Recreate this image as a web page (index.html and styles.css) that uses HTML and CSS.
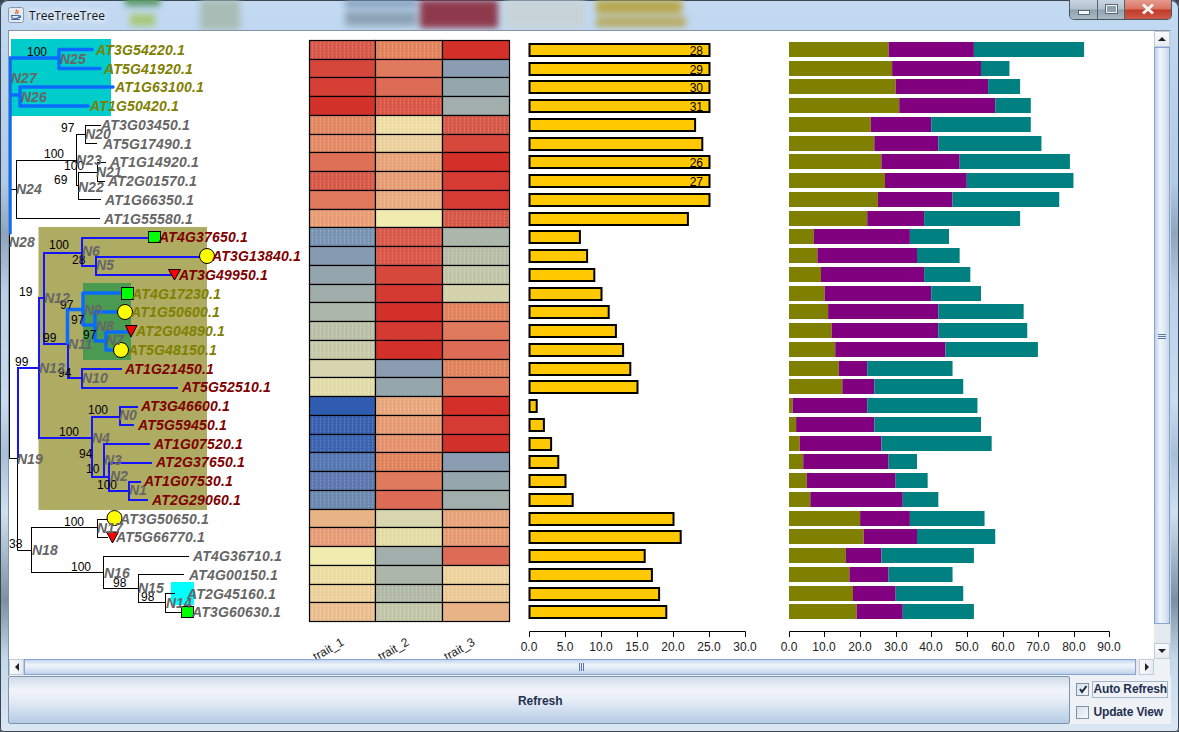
FILE: index.html
```html
<!DOCTYPE html>
<html lang="en">
<head>
<meta charset="utf-8">
<title>TreeTreeTree</title>
<link rel="stylesheet" href="styles.css">
</head>
<body>
<div class="window">
  <svg class="glass" viewBox="0 0 1179 30" aria-hidden="true">
    <g class="glass-blur">
      <rect x="125" y="-4" width="35" height="10" fill="#5c9a68"/>
      <rect x="130" y="14" width="25" height="12" fill="#a8c878"/>
      <rect x="200" y="0" width="40" height="30" fill="#a9bdb6"/>
      <rect x="345" y="0" width="72" height="7" fill="#7f9ab8"/>
      <rect x="345" y="11" width="72" height="15" fill="#8ea4b6"/>
      <rect x="420" y="0" width="78" height="28" fill="#8e3a4c"/>
      <rect x="505" y="0" width="80" height="28" fill="#c7d3d8"/>
      <rect x="596" y="0" width="86" height="14" fill="#b9a850"/>
      <rect x="596" y="17" width="90" height="10" fill="#b8ab62"/>
    </g>
  </svg>
  <header class="titlebar">
    <svg class="java-icon" viewBox="0 0 16 16" aria-hidden="true">
      <rect x="0.5" y="0.5" width="15" height="15" rx="2" fill="#e6eaf0" stroke="#8a97a6"/>
      <path d="M8 2.5C10 4 6.5 5 8 7M10 3.5C11 5 9 5.500 9.500 7" fill="none" stroke="#d9651e" stroke-width="1.200"/>
      <path d="M3.500 8.500H11V9.500C11 11 10 11.500 7.500 11.500C5 11.500 3.500 11 3.500 9.500ZM11 9H12.500V10.500H11M3 12.500H12" fill="none" stroke="#3c6ea8" stroke-width="1.100"/>
    </svg>
    <span class="title-text">TreeTreeTree</span>
    <div class="controls">
      <div class="ctl ctl-min"><span class="min-glyph"></span></div>
      <div class="ctl ctl-max"><span class="max-glyph"></span></div>
      <div class="ctl ctl-close">
        <svg class="close-glyph" viewBox="0 0 14 12" aria-hidden="true"><path d="M2 1.500L12 10.500M12 1.500L2 10.500"/></svg>
      </div>
    </div>
  </header>

  <div class="client">
    <div class="scrollpane">
      <div class="viewport">
        <svg class="chart" viewBox="9 31 1145 628" width="1145" height="628">
          <defs>
            <pattern id="d" width="4" height="3" patternUnits="userSpaceOnUse">
              <rect width="1" height="1" fill="#fff" fill-opacity="0.28"/>
              <rect x="2" y="1" width="1" height="1" fill="#000" fill-opacity="0.1"/>
            </pattern>
          </defs>
          <!-- highlight boxes -->
          <rect x="11" y="39" width="100" height="77" fill="#00cccc"/>
          <rect x="38.500" y="227" width="168.500" height="283" fill="#aeab62"/>
          <rect x="83" y="283" width="48" height="77" fill="#4b9a52"/>
          <rect x="171" y="582" width="23" height="23" fill="#00ffff"/>

          <!-- branches -->
          <path class="branch-black" d="M9.500 233V458.500H17.500V550.500H31.500M9.500 90V92M11 189.500H16.500M16.500 160V218.500M16 160.500H76M16 218.500H100M76.500 134V185M76 134.500H85.500M85.500 125V143M85 125.500H101M85 143.500H97M76 185.500H78.500M78.500 172V199.500M78 172.500H97M97.500 162V181M97 162.500H106M97 181.500H105M78 199.500H101M31.500 527V572M31 527.500H97M97.500 519V537M97 519.500H110M97 537.500H108M31 572.500H103.500M103.500 556V588M103 556.500H189M103 588.500H138M138.500 574V602M138 574.500H184M138 602.500H165M165.500 593V612M165 593.500H175M165 612.500H181"/>
          <path class="branch-blue" d="M17.500 458V367.500H38.500M38.500 297V437M38 297.500H43M43.500 252V343M43 252.500H81M81.500 237V265M81 237.500H148M81 265.500H95M95.500 256V274M95 256.500H200M95 274.500H172M43 343.500H67M67.500 343V377M67 377.500H81M81.500 368V387M81 368.500H122M81 387.500H178M38 437.500H91M91.500 416V476M91 416.500H119M119.500 406V424M119 406.500H138M119 424.500H134M91 476.500H103M103.500 443V476M103 443.500H150M103 476.500H108M108.500 462V490M108 462.500H152M108 490.500H128M128.500 481V499M128 481.500H141M128 499.500H148"/>
          <path class="branch-thick" d="M10 233V58H59M59 49.500V68.500M59 49.500H92M59 68.500H100M10 95H20M20 87V106M20 87H113M20 106H88M67.500 343V309.500H83M83 293V325M83 293H122M83 325H95M95 312V341M95 312H120M95 341H106M106 332V350M106 332H130M106 350H115"/>

          <!-- markers -->
          <rect class="mk-square" x="148.500" y="231.500" width="12" height="11"/>
          <circle class="mk-circle" cx="207" cy="256" r="7.500"/>
          <path class="mk-tri" d="M168.500 269.500H180.500L174.500 280Z"/>
          <rect class="mk-square" x="121.500" y="287.500" width="12" height="12"/>
          <circle class="mk-circle" cx="125" cy="312" r="7.500"/>
          <path class="mk-tri" d="M125.500 325.500H137L131 337Z"/>
          <circle class="mk-circle" cx="121" cy="350" r="7.500"/>
          <circle class="mk-circle" cx="114.500" cy="518" r="7.500"/>
          <path class="mk-tri" d="M106.500 532H118.500L112.500 543Z"/>
          <rect class="mk-square" x="181.500" y="606.500" width="12" height="11"/>

          <!-- support values -->
          <g class="support">
            <text x="27" y="56">100</text><text x="61" y="132">97</text><text x="44" y="158">100</text><text x="64" y="170">100</text><text x="54" y="184">69</text>
            <text x="49" y="249">100</text><text x="72" y="264">28</text><text x="19" y="296">19</text><text x="60" y="309">97</text><text x="71" y="324">97</text><text x="83" y="339">97</text><text x="43" y="342">99</text><text x="15" y="366">99</text><text x="58" y="377">94</text>
            <text x="88" y="414">100</text><text x="59" y="436">100</text><text x="79" y="458">94</text><text x="86" y="473">10</text><text x="97" y="489">100</text><text x="64" y="526">100</text><text x="9" y="548">38</text><text x="71" y="571">100</text><text x="113" y="587">98</text><text x="141" y="601">98</text>
          </g>

          <!-- node names -->
          <g class="node">
            <text x="60" y="64">N25</text><text x="11" y="83">N27</text><text x="21" y="102">N26</text><text x="85" y="139">N20</text><text x="76" y="165">N23</text><text x="96" y="177">N21</text><text x="78" y="192">N22</text><text x="16" y="194">N24</text><text x="9" y="247">N28</text>
            <text x="82" y="256">N6</text><text x="96" y="270">N5</text><text x="44" y="303">N12</text><text x="39" y="373">N13</text><text x="84" y="315">N9</text><text x="96" y="331">N8</text><text x="106" y="345">N7</text><text x="68" y="349">N11</text><text x="82" y="383">N10</text><text x="119" y="420">N0</text>
            <text x="92" y="443">N4</text><text x="104" y="465">N3</text><text x="110" y="481">N2</text><text x="129" y="495">N1</text><text x="17" y="464">N19</text><text x="97" y="533">N17</text><text x="32" y="555">N18</text><text x="104" y="578">N16</text><text x="138" y="593">N15</text><text x="166" y="608">N14</text>
          </g>

          <!-- leaf names -->
          <g class="leaf leaf-olive">
            <text x="96" y="55">AT3G54220.1</text><text x="104" y="74">AT5G41920.1</text><text x="115" y="92">AT1G63100.1</text><text x="90" y="111">AT1G50420.1</text>
            <text x="132" y="299">AT4G17230.1</text><text x="131" y="317">AT1G50600.1</text><text x="136" y="336">AT2G04890.1</text><text x="128" y="355">AT5G48150.1</text>
          </g>
          <g class="leaf leaf-gray">
            <text x="101" y="130">AT3G03450.1</text><text x="103" y="149">AT5G17490.1</text><text x="110" y="167">AT1G14920.1</text><text x="108" y="186">AT2G01570.1</text><text x="105" y="205">AT1G66350.1</text><text x="104" y="224">AT1G55580.1</text>
            <text x="120" y="524">AT3G50650.1</text><text x="116" y="542">AT5G66770.1</text><text x="193" y="561">AT4G36710.1</text><text x="189" y="580">AT4G00150.1</text><text x="187" y="599">AT2G45160.1</text><text x="192" y="617">AT3G60630.1</text>
          </g>
          <g class="leaf leaf-maroon">
            <text x="159" y="242">AT4G37650.1</text><text x="212" y="261">AT3G13840.1</text><text x="179" y="280">AT3G49950.1</text><text x="125" y="374">AT1G21450.1</text><text x="182" y="392">AT5G52510.1</text>
            <text x="141" y="411">AT3G46600.1</text><text x="138" y="430">AT5G59450.1</text><text x="154" y="449">AT1G07520.1</text><text x="156" y="467">AT2G37650.1</text><text x="144" y="486">AT1G07530.1</text><text x="152" y="505">AT2G29060.1</text>
          </g>

          <!-- data rows: heat cells, value bar, stacked bar -->
          <g transform="translate(0,40.5)"><rect class="cell c1" height="19" fill="#d85a4a"/><rect class="cell c2" height="19" fill="#e38660"/><rect class="cell c3" height="19" fill="#d3302a"/><rect class="dither c1" height="18" fill="url(#d)"/><rect class="dither c2" height="18" fill="url(#d)"/><rect class="bar" width="180"/><text class="bar-num" x="703" y="14.500">28</text><g class="stack"><rect class="s1" width="28"/><rect class="s2" x="28" width="24"/><rect class="s3" x="52" width="31"/></g></g>
          <g transform="translate(0,59.5)"><rect class="cell c1" height="18" fill="#d6473b"/><rect class="cell c2" height="18" fill="#e07a5c"/><rect class="cell c3" height="18" fill="#8a9db1"/><rect class="bar" width="180"/><text class="bar-num" x="703" y="14.500">29</text><g class="stack"><rect class="s1" width="29"/><rect class="s2" x="29" width="25"/><rect class="s3" x="54" width="8"/></g></g>
          <g transform="translate(0,77.5)"><rect class="cell c1" height="19" fill="#d53f35"/><rect class="cell c2" height="19" fill="#dd6c56"/><rect class="cell c3" height="19" fill="#96a6ad"/><rect class="bar" width="180"/><text class="bar-num" x="703" y="14.500">30</text><g class="stack"><rect class="s1" width="30"/><rect class="s2" x="30" width="26"/><rect class="s3" x="56" width="9"/></g></g>
          <g transform="translate(0,96.5)"><rect class="cell c1" height="19" fill="#d2322a"/><rect class="cell c2" height="19" fill="#dd5a4b"/><rect class="cell c3" height="19" fill="#a1aeac"/><rect class="dither c2" height="18" fill="url(#d)"/><rect class="bar" width="180"/><text class="bar-num" x="703" y="14.500">31</text><g class="stack"><rect class="s1" width="31"/><rect class="s2" x="31" width="27"/><rect class="s3" x="58" width="10"/></g></g>
          <g transform="translate(0,115.500)"><rect class="cell c1" height="19" fill="#e38a65"/><rect class="cell c2" height="19" fill="#f0e0a8"/><rect class="cell c3" height="19" fill="#d75a4a"/><rect class="dither c1" height="18" fill="url(#d)"/><rect class="dither c2" height="18" fill="url(#d)"/><rect class="dither c3" height="18" fill="url(#d)"/><rect class="bar" width="165.600"/><g class="stack"><rect class="s1" width="23"/><rect class="s2" x="23" width="17"/><rect class="s3" x="40" width="28"/></g></g>
          <g transform="translate(0,134.500)"><rect class="cell c1" height="18" fill="#e48d68"/><rect class="cell c2" height="18" fill="#ecd3a0"/><rect class="cell c3" height="18" fill="#d6483c"/><rect class="dither c1" height="17" fill="url(#d)"/><rect class="dither c2" height="17" fill="url(#d)"/><rect class="bar" width="172.800"/><g class="stack"><rect class="s1" width="24"/><rect class="s2" x="24" width="18"/><rect class="s3" x="42" width="29"/></g></g>
          <g transform="translate(0,152.500)"><rect class="cell c1" height="19" fill="#de7058"/><rect class="cell c2" height="19" fill="#e9a57c"/><rect class="cell c3" height="19" fill="#d3302a"/><rect class="dither c2" height="18" fill="url(#d)"/><rect class="bar" width="180"/><text class="bar-num" x="703" y="14.500">26</text><g class="stack"><rect class="s1" width="26"/><rect class="s2" x="26" width="22"/><rect class="s3" x="48" width="31"/></g></g>
          <g transform="translate(0,171.500)"><rect class="cell c1" height="19" fill="#d95b4a"/><rect class="cell c2" height="19" fill="#e89f76"/><rect class="cell c3" height="19" fill="#d53b32"/><rect class="dither c1" height="18" fill="url(#d)"/><rect class="dither c2" height="18" fill="url(#d)"/><rect class="bar" width="180"/><text class="bar-num" x="703" y="14.500">27</text><g class="stack"><rect class="s1" width="27"/><rect class="s2" x="27" width="23"/><rect class="s3" x="50" width="30"/></g></g>
          <g transform="translate(0,190.500)"><rect class="cell c1" height="19" fill="#e0795c"/><rect class="cell c2" height="19" fill="#eaae82"/><rect class="cell c3" height="19" fill="#d53b32"/><rect class="dither c2" height="18" fill="url(#d)"/><rect class="bar" width="180"/><g class="stack"><rect class="s1" width="25"/><rect class="s2" x="25" width="21"/><rect class="s3" x="46" width="30"/></g></g>
          <g transform="translate(0,209.500)"><rect class="cell c1" height="18" fill="#eb9f76"/><rect class="cell c2" height="18" fill="#f0ebae"/><rect class="cell c3" height="18" fill="#d85a48"/><rect class="dither c1" height="17" fill="url(#d)"/><rect class="dither c3" height="17" fill="url(#d)"/><rect class="bar" width="158.400"/><g class="stack"><rect class="s1" width="22"/><rect class="s2" x="22" width="16"/><rect class="s3" x="38" width="27"/></g></g>
          <g transform="translate(0,227.500)"><rect class="cell c1" height="19" fill="#7a96b4"/><rect class="cell c2" height="19" fill="#db5c4c"/><rect class="cell c3" height="19" fill="#adb6aa"/><rect class="dither c1" height="18" fill="url(#d)"/><rect class="dither c2" height="18" fill="url(#d)"/><rect class="bar" width="50.400"/><g class="stack"><rect class="s1" width="7"/><rect class="s2" x="7" width="27"/><rect class="s3" x="34" width="11"/></g></g>
          <g transform="translate(0,246.500)"><rect class="cell c1" height="19" fill="#879bb2"/><rect class="cell c2" height="19" fill="#dc5a4c"/><rect class="cell c3" height="19" fill="#b9bfa8"/><rect class="dither c2" height="18" fill="url(#d)"/><rect class="dither c3" height="18" fill="url(#d)"/><rect class="bar" width="57.600"/><g class="stack"><rect class="s1" width="8"/><rect class="s2" x="8" width="28"/><rect class="s3" x="36" width="12"/></g></g>
          <g transform="translate(0,265.500)"><rect class="cell c1" height="19" fill="#95a5ad"/><rect class="cell c2" height="19" fill="#d6473c"/><rect class="cell c3" height="19" fill="#c4c8aa"/><rect class="dither c3" height="18" fill="url(#d)"/><rect class="bar" width="64.800"/><g class="stack"><rect class="s1" width="9"/><rect class="s2" x="9" width="29"/><rect class="s3" x="38" width="13"/></g></g>
          <g transform="translate(0,284.500)"><rect class="cell c1" height="18" fill="#a0adab"/><rect class="cell c2" height="18" fill="#d53a32"/><rect class="cell c3" height="18" fill="#d4d3ad"/><rect class="bar" width="72"/><g class="stack"><rect class="s1" width="10"/><rect class="s2" x="10" width="30"/><rect class="s3" x="40" width="14"/></g></g>
          <g transform="translate(0,302.500)"><rect class="cell c1" height="19" fill="#adb6aa"/><rect class="cell c2" height="19" fill="#d3302a"/><rect class="cell c3" height="19" fill="#e38660"/><rect class="dither c3" height="18" fill="url(#d)"/><rect class="bar" width="79.200"/><g class="stack"><rect class="s1" width="11"/><rect class="s2" x="11" width="31"/><rect class="s3" x="42" width="24"/></g></g>
          <g transform="translate(0,321.500)"><rect class="cell c1" height="19" fill="#bcc2a9"/><rect class="cell c2" height="19" fill="#d53a32"/><rect class="cell c3" height="19" fill="#e07a5c"/><rect class="dither c1" height="18" fill="url(#d)"/><rect class="bar" width="86.400"/><g class="stack"><rect class="s1" width="12"/><rect class="s2" x="12" width="30"/><rect class="s3" x="42" width="25"/></g></g>
          <g transform="translate(0,340.500)"><rect class="cell c1" height="19" fill="#c8cbaa"/><rect class="cell c2" height="19" fill="#d2302a"/><rect class="cell c3" height="19" fill="#dd6c56"/><rect class="dither c1" height="18" fill="url(#d)"/><rect class="bar" width="93.600"/><g class="stack"><rect class="s1" width="13"/><rect class="s2" x="13" width="31"/><rect class="s3" x="44" width="26"/></g></g>
          <g transform="translate(0,359.500)"><rect class="cell c1" height="18" fill="#d6d5ad"/><rect class="cell c2" height="18" fill="#8a9db1"/><rect class="cell c3" height="18" fill="#e38660"/><rect class="dither c3" height="17" fill="url(#d)"/><rect class="bar" width="100.800"/><g class="stack"><rect class="s1" width="14"/><rect class="s2" x="14" width="8"/><rect class="s3" x="22" width="24"/></g></g>
          <g transform="translate(0,377.500)"><rect class="cell c1" height="19" fill="#e4deab"/><rect class="cell c2" height="19" fill="#96a6ad"/><rect class="cell c3" height="19" fill="#e07a5c"/><rect class="dither c1" height="18" fill="url(#d)"/><rect class="bar" width="108"/><g class="stack"><rect class="s1" width="15"/><rect class="s2" x="15" width="9"/><rect class="s3" x="24" width="25"/></g></g>
          <g transform="translate(0,396.500)"><rect class="cell c1" height="19" fill="#2f5cb0"/><rect class="cell c2" height="19" fill="#e9a87e"/><rect class="cell c3" height="19" fill="#d3302a"/><rect class="dither c2" height="18" fill="url(#d)"/><rect class="bar" width="7.200"/><g class="stack"><rect class="s1" width="1"/><rect class="s2" x="1" width="21"/><rect class="s3" x="22" width="31"/></g></g>
          <g transform="translate(0,415.500)"><rect class="cell c1" height="19" fill="#3a62b0"/><rect class="cell c2" height="19" fill="#e89d74"/><rect class="cell c3" height="19" fill="#d53b32"/><rect class="dither c1" height="18" fill="url(#d)"/><rect class="dither c2" height="18" fill="url(#d)"/><rect class="bar" width="14.400"/><g class="stack"><rect class="s1" width="2"/><rect class="s2" x="2" width="22"/><rect class="s3" x="24" width="30"/></g></g>
          <g transform="translate(0,434.500)"><rect class="cell c1" height="18" fill="#3d66b2"/><rect class="cell c2" height="18" fill="#e79570"/><rect class="cell c3" height="18" fill="#d2302a"/><rect class="dither c1" height="17" fill="url(#d)"/><rect class="dither c2" height="17" fill="url(#d)"/><rect class="bar" width="21.600"/><g class="stack"><rect class="s1" width="3"/><rect class="s2" x="3" width="23"/><rect class="s3" x="26" width="31"/></g></g>
          <g transform="translate(0,452.500)"><rect class="cell c1" height="19" fill="#5878b4"/><rect class="cell c2" height="19" fill="#e38660"/><rect class="cell c3" height="19" fill="#8a9db1"/><rect class="dither c1" height="18" fill="url(#d)"/><rect class="dither c2" height="18" fill="url(#d)"/><rect class="bar" width="28.800"/><g class="stack"><rect class="s1" width="4"/><rect class="s2" x="4" width="24"/><rect class="s3" x="28" width="8"/></g></g>
          <g transform="translate(0,471.500)"><rect class="cell c1" height="19" fill="#5f7ab2"/><rect class="cell c2" height="19" fill="#e07a5c"/><rect class="cell c3" height="19" fill="#96a6ad"/><rect class="dither c1" height="18" fill="url(#d)"/><rect class="bar" width="36"/><g class="stack"><rect class="s1" width="5"/><rect class="s2" x="5" width="25"/><rect class="s3" x="30" width="9"/></g></g>
          <g transform="translate(0,490.500)"><rect class="cell c1" height="19" fill="#6d8ab0"/><rect class="cell c2" height="19" fill="#dd6c56"/><rect class="cell c3" height="19" fill="#a1aeac"/><rect class="dither c1" height="18" fill="url(#d)"/><rect class="bar" width="43.200"/><g class="stack"><rect class="s1" width="6"/><rect class="s2" x="6" width="26"/><rect class="s3" x="32" width="10"/></g></g>
          <g transform="translate(0,509.500)"><rect class="cell c1" height="18" fill="#e8b486"/><rect class="cell c2" height="18" fill="#d7d6ae"/><rect class="cell c3" height="18" fill="#e9a57c"/><rect class="dither c3" height="17" fill="url(#d)"/><rect class="bar" width="144"/><g class="stack"><rect class="s1" width="20"/><rect class="s2" x="20" width="14"/><rect class="s3" x="34" width="21"/></g></g>
          <g transform="translate(0,527.500)"><rect class="cell c1" height="19" fill="#e9a07a"/><rect class="cell c2" height="19" fill="#e6dfaa"/><rect class="cell c3" height="19" fill="#e89d74"/><rect class="dither c1" height="18" fill="url(#d)"/><rect class="dither c2" height="18" fill="url(#d)"/><rect class="dither c3" height="18" fill="url(#d)"/><rect class="bar" width="151.200"/><g class="stack"><rect class="s1" width="21"/><rect class="s2" x="21" width="15"/><rect class="s3" x="36" width="22"/></g></g>
          <g transform="translate(0,546.500)"><rect class="cell c1" height="19" fill="#f0ebae"/><rect class="cell c2" height="19" fill="#a1aeac"/><rect class="cell c3" height="19" fill="#dd6c56"/><rect class="bar" width="115.200"/><g class="stack"><rect class="s1" width="16"/><rect class="s2" x="16" width="10"/><rect class="s3" x="26" width="26"/></g></g>
          <g transform="translate(0,565.500)"><rect class="cell c1" height="19" fill="#eedfa4"/><rect class="cell c2" height="19" fill="#adb6aa"/><rect class="cell c3" height="19" fill="#efd5a0"/><rect class="dither c1" height="18" fill="url(#d)"/><rect class="dither c3" height="18" fill="url(#d)"/><rect class="bar" width="122.400"/><g class="stack"><rect class="s1" width="17"/><rect class="s2" x="17" width="11"/><rect class="s3" x="28" width="18"/></g></g>
          <g transform="translate(0,584.500)"><rect class="cell c1" height="18" fill="#efd39e"/><rect class="cell c2" height="18" fill="#b4bcaa"/><rect class="cell c3" height="18" fill="#eecb98"/><rect class="dither c1" height="17" fill="url(#d)"/><rect class="dither c2" height="17" fill="url(#d)"/><rect class="dither c3" height="17" fill="url(#d)"/><rect class="bar" width="129.600"/><g class="stack"><rect class="s1" width="18"/><rect class="s2" x="18" width="12"/><rect class="s3" x="30" width="19"/></g></g>
          <g transform="translate(0,602.500)"><rect class="cell c1" height="19" fill="#ecc090"/><rect class="cell c2" height="19" fill="#c4c8aa"/><rect class="cell c3" height="19" fill="#e8b486"/><rect class="dither c1" height="18" fill="url(#d)"/><rect class="dither c2" height="18" fill="url(#d)"/><rect class="bar" width="136.800"/><g class="stack"><rect class="s1" width="19"/><rect class="s2" x="19" width="13"/><rect class="s3" x="32" width="20"/></g></g>

          <!-- axes -->
          <path class="axis" d="M529.500 637V631.500H745.500V637M565.500 632V637M601.500 632V637M637.500 632V637M673.500 632V637M709.500 632V637"/>
          <path class="axis" d="M789.500 637V631.500H1109.500V637M824.500 632V637M860.500 632V637M896.500 632V637M931.500 632V637M967.500 632V637M1003.500 632V637M1038.500 632V637M1074.500 632V637"/>
          <g class="tick">
            <text x="529" y="651">0.0</text><text x="565" y="651">5.0</text><text x="601" y="651">10.0</text><text x="637" y="651">15.0</text><text x="673" y="651">20.0</text><text x="709" y="651">25.0</text><text x="745" y="651">30.0</text>
            <text x="789" y="651">0.0</text><text x="824" y="651">10.0</text><text x="860" y="651">20.0</text><text x="896" y="651">30.0</text><text x="931" y="651">40.0</text><text x="967" y="651">50.0</text><text x="1003" y="651">60.0</text><text x="1038" y="651">70.0</text><text x="1074" y="651">80.0</text><text x="1109" y="651">90.0</text>
          </g>
          <g class="trait">
            <text transform="translate(316,661) rotate(-30)">trait_1</text>
            <text transform="translate(381,661) rotate(-30)">trait_2</text>
            <text transform="translate(447,661) rotate(-30)">trait_3</text>
          </g>
        </svg>
      </div>

      <div class="vscroll">
        <div class="sb-btn"><span class="arrow arrow-up"></span></div>
        <div class="v-thumb"><span class="v-grip"></span></div>
        <div class="v-track"></div>
        <div class="sb-btn"><span class="arrow arrow-down"></span></div>
      </div>
      <div class="hscroll">
        <div class="sb-btn sb-btn-h"><span class="arrow arrow-left"></span></div>
        <div class="h-thumb"><span class="h-grip"></span></div>
        <div class="h-track"></div>
        <div class="sb-btn sb-btn-h"><span class="arrow arrow-right"></span></div>
      </div>
      <div class="corner"></div>
    </div>

    <div class="actions">
      <button class="refresh" type="button">Refresh</button>
      <div class="checks">
        <label class="check check-focus"><span class="box box-on">
          <svg class="tick-glyph" viewBox="0 0 10 10" aria-hidden="true"><path d="M2 5L4 8L8.500 2"/></svg>
        </span><span class="check-label">Auto Refresh</span></label>
        <label class="check"><span class="box"></span><span class="check-label">Update View</span></label>
      </div>
    </div>
  </div>
</div>
</body>
</html>
```
FILE: styles.css
```css
* { box-sizing: border-box; }
html, body { margin: 0; padding: 0; }
body { width: 1179px; height: 732px; overflow: hidden; background: #3a4450; font-family: "Liberation Sans", Arial, sans-serif; }

.window {
  position: relative;
  width: 1179px;
  height: 732px;
  display: flex;
  flex-direction: column;
  border-radius: 8px 8px 4px 4px;
  overflow: hidden;
  background: linear-gradient(180deg, #c3daf2 0, #aecbe8 25%, #8ea5bd 32%, #b9d0e8 40%, #c9dcf0 55%, #a8bfd8 62%, #cfe0f2 70%, #7c8fa3 82%, #c4d8ec 90%, #dbe7f3 100%);
  box-shadow: inset 0 0 0 1px #3a4450;
}

.glass { position: absolute; left: 0; top: 0; width: 1179px; height: 30px; }
.glass-blur { filter: blur(3px); }

.titlebar {
  position: relative;
  height: 30px;
  flex: none;
  display: flex;
  align-items: center;
  padding: 0 0 0 8px;
}
.java-icon { width: 16px; height: 16px; flex: none; }
.title-text {
  margin-left: 5px;
  font: 12px "Open Sans", sans-serif;
  color: #101820;
  letter-spacing: 0.100px;
  text-shadow: 0 0 6px #fff, 0 0 10px #fff, 0 0 14px #fff;
}

.controls {
  position: absolute;
  top: 0;
  right: 7px;
  height: 20px;
  display: flex;
  border: 1px solid #4a5562;
  border-top: none;
  border-radius: 0 0 5px 5px;
  overflow: hidden;
}
.ctl { height: 19px; display: flex; align-items: center; justify-content: center; border-right: 1px solid #56626e; }
.ctl-min { width: 28px; background: linear-gradient(180deg, #c8d6e2 0, #b0c0cd 48%, #8fa1ae 52%, #a9bac6 100%); }
.ctl-max { width: 27px; background: linear-gradient(180deg, #c8d6e2 0, #b0c0cd 48%, #8fa1ae 52%, #a9bac6 100%); }
.ctl-close { width: 46px; border-right: none; background: linear-gradient(180deg, #e49a8c 0, #d97262 48%, #bf3a28 52%, #d0594a 100%); }
.min-glyph { width: 12px; height: 5px; margin-top: 6px; background: #f4f7fa; border: 1px solid #5a6672; }
.max-glyph { width: 13px; height: 10px; margin-top: -1px; border: 2px solid #f0f4f7; outline: 1px solid #5a6672; outline-offset: -1px; background: #8fa1ae; }
.close-glyph { width: 14px; height: 12px; margin-top: -1px; }
.close-glyph path { fill: none; stroke: #f4f4f4; stroke-width: 3; }

.client {
  position: relative;
  flex: 1;
  margin: 0 8px 8px 8px;
  display: flex;
  flex-direction: column;
  background: #eef2f7;
}

.scrollpane {
  display: grid;
  grid-template-columns: 1fr 16px;
  grid-template-rows: 628px 16px;
  flex: none;
  height: 646px;
  border-top: 1px solid #8494a4;
  border-left: 1px solid #8494a4;
  border-right: 1px solid #c8d2dd;
  padding-bottom: 1px;
}
.viewport { background: #fff; overflow: hidden; width: 1145px; height: 628px; }
.chart { display: block; }

.cell { stroke: #000; stroke-width: 1.200; y: 0; }
.dither { y: 0.500px; }
.c1 { x: 309.500px; width: 66px; }
.c2 { x: 375.500px; width: 67px; }
.c3 { x: 442.500px; width: 67px; }

.bar { x: 529.500px; y: 3.500px; height: 12px; fill: #ffc800; stroke: #000; stroke-width: 2; }
.bar-num { font-size: 12px; text-anchor: end; fill: #000; }

.stack { transform: translate(789px, 1.500px) scale(3.5556, 1); }
.s1, .s2, .s3 { height: 15px; }
.s1 { fill: #808000; }
.s2 { fill: #800080; }
.s3 { fill: #008080; }

.branch-black, .branch-blue, .branch-thick { fill: none; }
.branch-black { stroke: #000; stroke-width: 1; }
.branch-blue { stroke: #1414ff; stroke-width: 2; shape-rendering: crispEdges; }
.branch-thick { stroke: #0a6cff; stroke-width: 3.500; stroke-linecap: round; }

.mk-square { fill: #00ff00; stroke: #000; stroke-width: 1; }
.mk-circle { fill: #ffff00; stroke: #000; stroke-width: 1; }
.mk-tri { fill: #ff0000; stroke: #000; stroke-width: 1; }

.support { font-size: 12px; fill: #000; }
.node { font-size: 14px; font-weight: bold; font-style: italic; fill: #666; }
.leaf { font-size: 14px; font-weight: bold; font-style: italic; letter-spacing: 0.200px; }
.leaf-olive { fill: #808000; }
.leaf-gray { fill: #666; }
.leaf-maroon { fill: #800000; }

.axis { fill: none; stroke: #000; stroke-width: 1; }
.tick { font-size: 12px; fill: #222; text-anchor: middle; }
.trait { font-size: 12px; fill: #222; }

.vscroll { display: flex; flex-direction: column; height: 628px; background: #eef2f7; }
.sb-btn {
  width: 16px; height: 16px; flex: none;
  display: flex; align-items: center; justify-content: center;
  background: linear-gradient(180deg, #fafbfd, #e6ebf2);
  border: 1px solid #c2ccd8;
}
.sb-btn-h { background: linear-gradient(90deg, #fafbfd, #e6ebf2); width: 15px; }
.arrow { width: 0; height: 0; border-style: solid; border-color: transparent; }
.arrow-up { border-width: 0 4px 4px; border-bottom-color: #222; }
.arrow-down { border-width: 4px 4px 0; border-top-color: #222; }
.arrow-left { border-width: 4px 4px 4px 0; border-right-color: #222; }
.arrow-right { border-width: 4px 0 4px 4px; border-left-color: #222; }
.v-thumb {
  height: 577px; flex: none;
  display: flex; align-items: center; justify-content: center;
  background: linear-gradient(90deg, #bcd1ea 0, #f0f5fb 35%, #dde8f4 70%, #c3d6ec 100%);
  border: 1px solid #88a3cf;
}
.v-grip { width: 8px; height: 5px; margin-top: 2px; border-top: 1px solid #5a78a8; border-bottom: 1px solid #5a78a8; background: linear-gradient(180deg, transparent 40%, #5a78a8 40%, #5a78a8 60%, transparent 60%); }
.v-track { flex: 1; background: #e4e9ef; }

.hscroll { display: flex; height: 16px; background: #eef2f7; }
.h-thumb {
  width: 1112px; flex: none;
  display: flex; align-items: center; justify-content: center;
  background: linear-gradient(180deg, #c3d6ec 0, #f0f5fb 35%, #dde8f4 65%, #bcd1ea 100%);
  border: 1px solid #88a3cf;
}
.h-grip { width: 5px; height: 8px; margin-left: 2px; border-left: 1px solid #5a78a8; border-right: 1px solid #5a78a8; background: linear-gradient(90deg, transparent 40%, #5a78a8 40%, #5a78a8 60%, transparent 60%); }
.h-track { flex: 1; background: #e4e9ef; }
.corner { background: #eef2f7; }

.actions { flex: 1; display: flex; }
.refresh {
  width: 1064px;
  height: 48px;
  padding: 2px 0 0 2px;
  border: 1px solid #7f93a9;
  border-radius: 2px;
  background: linear-gradient(180deg, #cfdcea 0, #f0f4f9 28%, #e8eef6 48%, #cdddee 75%, #b5cbe4 100%);
  font: bold 12px "Liberation Sans", Arial, sans-serif;
  color: #1f3050;
}
.checks { flex: 1; display: flex; flex-direction: column; padding: 4px 3px 0 6px; gap: 5px; background: #eef2f7; }
.check { display: flex; align-items: center; gap: 3px; height: 18px; }
.check-label { font: bold 12px "Liberation Sans", Arial, sans-serif; color: #1f3050; padding: 0 1px; white-space: nowrap; letter-spacing: -0.150px; }
.check-focus .check-label { border: 1px solid #a4b6c8; line-height: 15px; padding: 0; }
.box {
  width: 13px; height: 13px; flex: none;
  display: flex; align-items: center; justify-content: center;
  border: 1px solid #7f93a9;
  background: linear-gradient(135deg, #d6e0ec, #f5f8fb);
}
.tick-glyph { width: 10px; height: 10px; }
.tick-glyph path { fill: none; stroke: #1c2a3a; stroke-width: 2; }
```
